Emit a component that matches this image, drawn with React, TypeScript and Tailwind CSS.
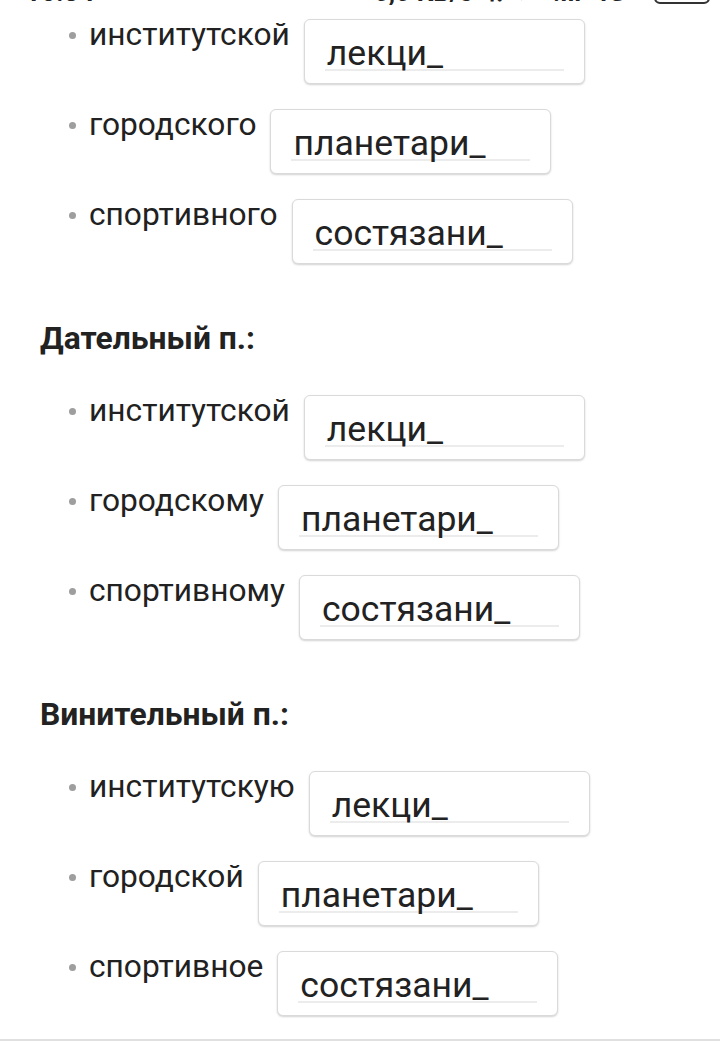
import React from "react";

type Row = { label: string; answer: string };

const sections: { title?: string; rows: Row[] }[] = [
  {
    rows: [
      { label: "институтской", answer: "лекци_" },
      { label: "городского", answer: "планетари_" },
      { label: "спортивного", answer: "состязани_" },
    ],
  },
  {
    title: "Дательный п.:",
    rows: [
      { label: "институтской", answer: "лекци_" },
      { label: "городскому", answer: "планетари_" },
      { label: "спортивному", answer: "состязани_" },
    ],
  },
  {
    title: "Винительный п.:",
    rows: [
      { label: "институтскую", answer: "лекци_" },
      { label: "городской", answer: "планетари_" },
      { label: "спортивное", answer: "состязани_" },
    ],
  },
];

function StatusBar() {
  return (
    <div className="h-[5px] overflow-hidden">
      <div className="-mt-[21px] flex h-[27px] items-end justify-between pl-[25px] pr-[10px] text-[#222]">
        <span className="text-[27px] font-bold leading-[27px]">16:34</span>
        <div className="flex items-end gap-[12px] text-[26px] font-bold leading-[27px]">
          <span>0,0 KB/s</span>
          <span>⇅</span>
          <span>≋</span>
          <span>.ıll</span>
          <span>4G+</span>
          <div className="mb-[2px] ml-[2px] h-[20px] w-[56px] rounded-[6px] border-[2px] border-[#333]" />
        </div>
      </div>
    </div>
  );
}

function Item({ row }: { row: Row }) {
  return (
    <li className="flex items-start">
      <span className="mt-[13px] mr-[13px] h-[7px] w-[7px] shrink-0 rounded-full bg-[#9e9e9e]" />
      <span className="mr-[14px] whitespace-nowrap text-[31.7px] leading-[32px] text-[#212121]">
        {row.label}
      </span>
      <div className="h-[65px] w-[281px] shrink-0 rounded-[6px] border border-[#dadada] bg-white px-[20px] pt-[17px] shadow-[0_1px_2px_rgba(0,0,0,0.18)]">
        <div className="pl-[2px] text-[35.5px] leading-[32px] text-[#222]">{row.answer}</div>
        <div className="h-[2px] bg-[#ececec]" />
      </div>
    </li>
  );
}

export default function App() {
  return (
    <div
      className="relative h-[1047px] w-[720px] overflow-hidden bg-white"
      style={{ fontFamily: "Roboto, 'Noto Sans', sans-serif" }}
    >
      <StatusBar />
      <div className="px-[40px] pt-[14px]">
        {sections.map((s, i) => (
          <div key={i} className={i > 0 ? "mt-[58px]" : ""}>
            {s.title && (
              <h2 className="mb-[41px] text-[31.8px] font-bold leading-[32px] text-[#222]">
                {s.title}
              </h2>
            )}
            <ul className="flex flex-col gap-[25px] pl-[29px]">
              {s.rows.map((r, j) => (
                <Item key={j} row={r} />
              ))}
            </ul>
          </div>
        ))}
      </div>
      <div className="absolute left-0 right-0 top-[1039px] h-[2px] bg-[#e0e0e0]" />
    </div>
  );
}
